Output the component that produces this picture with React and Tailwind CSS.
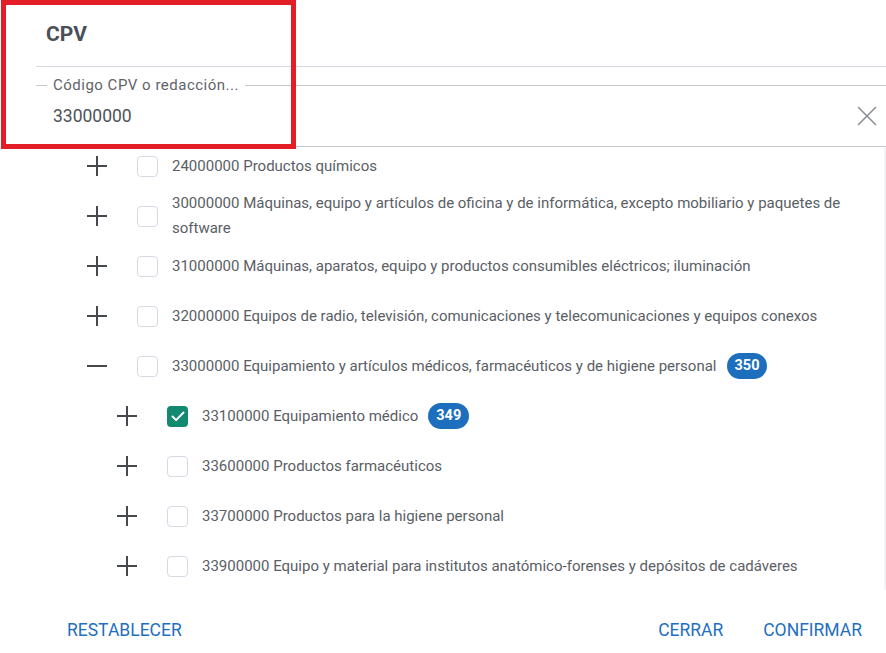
import { X } from 'lucide-react';

const rows = [
    { code: '24000000', label: 'Productos químicos', level: 0 },
    { code: '30000000', label: 'Máquinas, equipo y artículos de oficina y de informática, excepto mobiliario y paquetes de software', level: 0 },
    { code: '31000000', label: 'Máquinas, aparatos, equipo y productos consumibles eléctricos; iluminación', level: 0 },
    { code: '32000000', label: 'Equipos de radio, televisión, comunicaciones y telecomunicaciones y equipos conexos', level: 0 },
    { code: '33000000', label: 'Equipamiento y artículos médicos, farmacéuticos y de higiene personal', level: 0, open: true, count: 350 },
    { code: '33100000', label: 'Equipamiento médico', level: 1, checked: true, count: 349 },
    { code: '33600000', label: 'Productos farmacéuticos', level: 1 },
    { code: '33700000', label: 'Productos para la higiene personal', level: 1 },
    { code: '33900000', label: 'Equipo y material para institutos anatómico-forenses y depósitos de cadáveres', level: 1 },
];

function Expander({ open }) {
    return (
        <svg width="22" height="22" viewBox="0 0 22 22" className="block text-[#45484d]">
            <line x1="1" y1="11" x2="21" y2="11" stroke="currentColor" strokeWidth="2" />
            {!open && <line x1="11" y1="1" x2="11" y2="21" stroke="currentColor" strokeWidth="2" />}
        </svg>
    );
}

function Checkbox({ checked }) {
    if (checked) {
        return (
            <div className="ml-[29px] flex h-[21px] w-[21px] shrink-0 items-center justify-center rounded-[4px] bg-[#13896f]">
                <svg width="16" height="16" viewBox="0 0 16 16" fill="none">
                    <path d="M2.5 8.5l3.6 3.6L13.5 4.5" stroke="white" strokeWidth="2" strokeLinecap="round" strokeLinejoin="round" />
                </svg>
            </div>
        );
    }
    return <div className="ml-[29px] h-[21px] w-[21px] shrink-0 rounded-[4px] border border-[#d9d9e6] bg-white" />;
}

function Badge({ value }) {
    return (
        <span className="ml-[10px] inline-flex h-[26px] shrink-0 items-center rounded-full bg-[#1d6fbe] px-[8px] text-[14.5px] font-bold text-white">
            {value}
        </span>
    );
}

function TreeRow({ row }) {
    return (
        <div className={`flex min-h-[50px] items-center pr-[26px] ${row.level === 1 ? 'pl-[116px]' : 'pl-[86px]'}`}>
            <div className="flex w-[22px] shrink-0 justify-center">
                <Expander open={row.open} />
            </div>
            <Checkbox checked={row.checked} />
            <span className="ml-[14px] text-[15px] leading-[25px] text-[#5a5e65]">
                {row.code} {row.label}
            </span>
            {row.count && <Badge value={row.count} />}
        </div>
    );
}

export default function App() {
    return (
        <div className="relative h-[653px] w-[886px] overflow-hidden bg-white font-['Roboto','Liberation_Sans',sans-serif]">
            {/* Header */}
            <div className="ml-[36px] flex h-[67px] items-center border-b border-[#d8d8e4] pl-[10px] pt-[4px]">
                <h2 className="text-[21px] font-bold text-[#4b4f57]">CPV</h2>
            </div>

            {/* Search field */}
            <div className="relative ml-[36px] mt-[18px] flex h-[62px] items-center border-y border-[#c7c7d2] pl-[17px] pr-[2px]">
                <span className="absolute -top-[11px] left-[11px] bg-white px-[6px] text-[15px] leading-[20px] tracking-[0.5px] text-[#5f636a]">
                    Código CPV o redacción...
                </span>
                <span className="flex-1 text-[17.5px] text-[#4e5258]">33000000</span>
                <X size={34} strokeWidth={1.1} className="text-[#8a8d94]" />
            </div>

            {/* Tree */}
            <div className="h-[443px] overflow-hidden border-r-2 border-[#f3f3f6]">
                <div className="-mt-[6px]">
                    {rows.map((row) => (
                        <TreeRow key={row.code} row={row} />
                    ))}
                </div>
            </div>

            {/* Footer actions */}
            <div className="flex items-center pl-[67px] pr-[24px] pt-[28px] text-[17.5px] leading-[24px] text-[#1f6fbf]">
                <button>RESTABLECER</button>
                <div className="ml-auto flex gap-[40px]">
                    <button>CERRAR</button>
                    <button>CONFIRMAR</button>
                </div>
            </div>

            {/* Highlight frame */}
            <div className="pointer-events-none absolute left-[1px] top-0 h-[149px] w-[295px] border-[5px] border-[#e41e26]" />
        </div>
    );
}
